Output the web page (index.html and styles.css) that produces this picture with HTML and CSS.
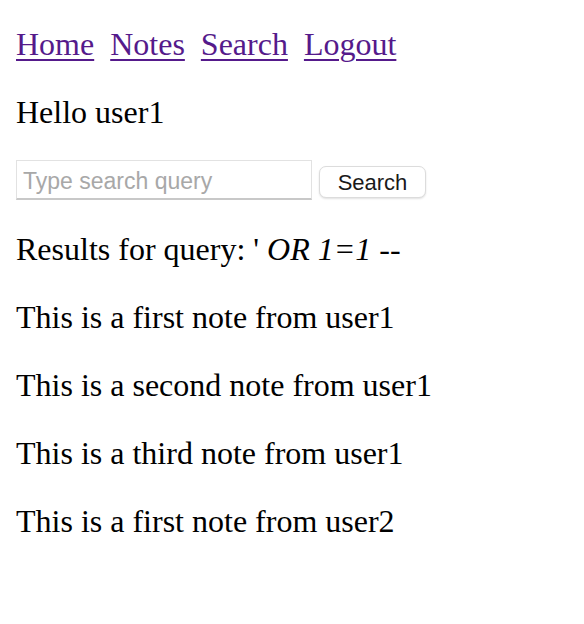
FILE: index.html
```html
<!DOCTYPE html>
<html>
<head>
<meta charset="utf-8">
<title>Notes</title>
<link rel="stylesheet" href="styles.css">
</head>
<body>
<nav class="nav"><a href="#">Home</a><a href="#">Notes</a><a href="#">Search</a><a href="#">Logout</a></nav>
<p class="para greeting">Hello user1</p>
<form class="search-form">
  <input class="search-input" type="text" placeholder="Type search query"><button class="search-btn" type="button">Search</button>
</form>
<p class="para">Results for query: ' <i>OR 1=1 --</i></p>
<p class="para">This is a first note from user1</p>
<p class="para">This is a second note from user1</p>
<p class="para">This is a third note from user1</p>
<p class="para">This is a first note from user2</p>
</body>
</html>
```
FILE: styles.css
```css
html, body {
  background: #ffffff;
}
body {
  margin: 16px;
  font-family: "Liberation Serif", "Times New Roman", serif;
  font-size: 32px;
  color: #000000;
}
.nav {
  display: flex;
  gap: 16px;
  padding-top: 10px;
  line-height: 37px;
}
.nav a {
  color: #551a8b;
  text-decoration: underline;
  text-decoration-thickness: 2px;
  text-underline-offset: 4px;
}
.para {
  margin: 31px 0;
  line-height: 37px;
}
.greeting {
  margin-bottom: 29px;
}
.search-form {
  display: flex;
  align-items: flex-end;
  gap: 7px;
  height: 40px;
}
.search-input {
  box-sizing: border-box;
  width: 296px;
  height: 40px;
  margin: 0;
  padding: 4px 6px 0;
  border: 1px solid #e2e2e2;
  border-bottom: 2px solid #c8c8c8;
  border-radius: 0;
  font-family: "Liberation Sans", Arial, sans-serif;
  font-size: 23px;
  color: #000;
  outline: none;
}
.search-input::placeholder {
  color: #a8a8a8;
}
.search-btn {
  box-sizing: border-box;
  width: 107px;
  height: 32px;
  margin: 0 0 2px;
  padding: 2px 0 0;
  border: 1px solid #dcdcdc;
  border-radius: 7px;
  background: #ffffff;
  box-shadow: 0 1px 2px rgba(0,0,0,0.12);
  font-family: "Liberation Sans", Arial, sans-serif;
  font-size: 22px;
  color: #1a1a1a;
}
```
